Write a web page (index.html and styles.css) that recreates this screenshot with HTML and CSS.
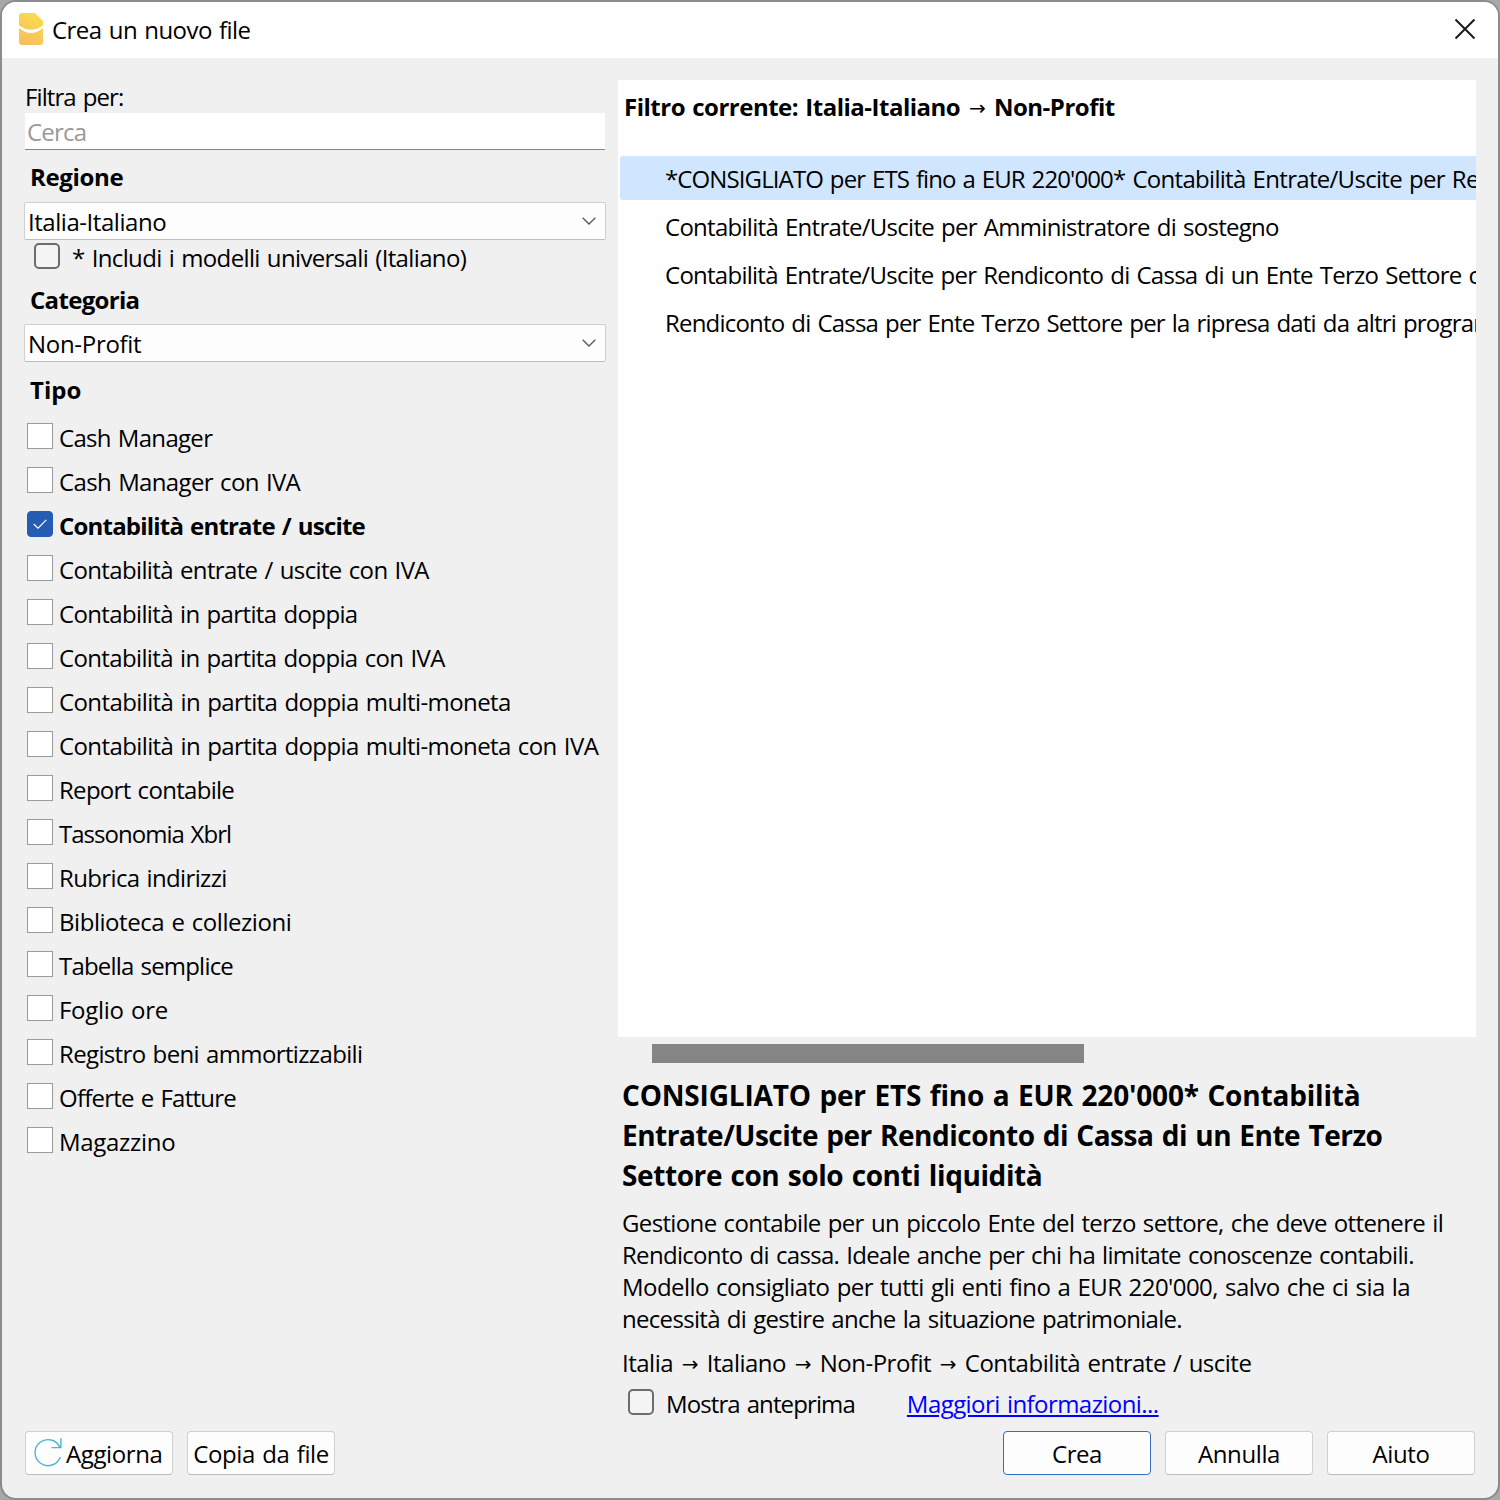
FILE: index.html
```html
<!DOCTYPE html>
<html lang="it">
<head>
<meta charset="utf-8">
<title>Crea un nuovo file</title>
<link rel="stylesheet" href="styles.css">
</head>
<body>
<div class="dialog">
  <header class="titlebar">
    <svg class="logo" width="24" height="32" viewBox="0 0 24 32"><defs><linearGradient id="gold" x1="0.7" y1="0" x2="0.3" y2="1"><stop offset="0" stop-color="#fbdc4c"/><stop offset="1" stop-color="#f5bf60"/></linearGradient></defs><path d="M3 0H16L24 8V29Q24 32 21 32H3Q0 32 0 29V3Q0 0 3 0Z" fill="url(#gold)"/><path d="M0 12.5Q12 21 24 12.5V15Q12 25 0 15Z" fill="#fff"/></svg>
    <h1 class="title">Crea un nuovo file</h1>
    <svg class="close" width="22" height="22" viewBox="0 0 22 22"><path d="M1.5 1.5L20.5 20.5M20.5 1.5L1.5 20.5" stroke="#1a1a1a" stroke-width="2" fill="none"/></svg>
  </header>
  <main class="content">
    <section class="filters">
      <label class="search-label">Filtra per:</label>
      <div class="search">Cerca</div>
      <h2 class="group region">Regione</h2>
      <div class="combo"><span class="k45">Italia-Italiano</span><svg class="chevron" width="14" height="8" viewBox="0 0 14 8"><path d="M.7.8L7 7 13.3.8" fill="none" stroke="#555" stroke-width="1.3"/></svg></div>
      <div class="include"><i class="box"></i><span>* Includi i modelli universali (Italiano)</span></div>
      <h2 class="group category">Categoria</h2>
      <div class="combo"><span class="k30">Non-Profit</span><svg class="chevron" width="14" height="8" viewBox="0 0 14 8"><path d="M.7.8L7 7 13.3.8" fill="none" stroke="#555" stroke-width="1.3"/></svg></div>
      <h2 class="group type">Tipo</h2>
      <ul class="types">
        <li><i class="check"></i><span class="k70">Cash Manager</span></li>
        <li><i class="check"></i><span>Cash Manager con IVA</span></li>
        <li class="checked"><i class="check"><svg width="14" height="10" viewBox="0 0 14 10"><path d="M.7 5L5 9.2 13.3.8" fill="none" stroke="#fff" stroke-width="1.2"/></svg></i><span>Contabilità entrate / uscite</span></li>
        <li><i class="check"></i><span>Contabilità entrate / uscite con IVA</span></li>
        <li><i class="check"></i><span>Contabilità in partita doppia</span></li>
        <li><i class="check"></i><span>Contabilità in partita doppia con IVA</span></li>
        <li><i class="check"></i><span class="k60">Contabilità in partita doppia multi-moneta</span></li>
        <li><i class="check"></i><span class="k60">Contabilità in partita doppia multi-moneta con IVA</span></li>
        <li><i class="check"></i><span class="k70">Report contabile</span></li>
        <li><i class="check"></i><span class="k95">Tassonomia Xbrl</span></li>
        <li><i class="check"></i><span>Rubrica indirizzi</span></li>
        <li><i class="check"></i><span class="k45">Biblioteca e collezioni</span></li>
        <li><i class="check"></i><span class="k80">Tabella semplice</span></li>
        <li><i class="check"></i><span class="k30">Foglio ore</span></li>
        <li><i class="check"></i><span>Registro beni ammortizzabili</span></li>
        <li><i class="check"></i><span class="k76">Offerte e Fatture</span></li>
        <li><i class="check"></i><span class="k30">Magazzino</span></li>
      </ul>
    </section>
    <section class="results">
      <div class="list">
        <h2 class="current">Filtro corrente: Italia-Italiano <b class="arrow">→</b> Non-Profit</h2>
        <ul class="templates">
          <li class="selected"><span class="k89">*CONSIGLIATO per ETS fino a EUR 220'000*</span> <span class="k70">Contabilità Entrate/Uscite per Rendiconto</span></li>
          <li><span class="k72">Contabilità Entrate/Uscite per Amministratore di sostegno</span></li>
          <li><span class="k74">Contabilità Entrate/Uscite per Rendiconto di Cassa di un Ente Terzo Settore con</span></li>
          <li><span class="k80">Rendiconto di Cassa per Ente Terzo Settore per la ripresa dati da altri programmi</span></li>
        </ul>
      </div>
      <div class="scrollbar"><div class="thumb"></div></div>
      <h2 class="heading"><span class="k18">CONSIGLIATO per ETS fino a EUR 220'000* Contabilità</span><br><span class="k49">Entrate/Uscite per Rendiconto di Cassa di un Ente Terzo</span><br><span class="k40">Settore con solo conti liquidità</span></h2>
      <p class="description"><span>Gestione contabile per un piccolo Ente del terzo settore, che deve ottenere il</span><br><span class="k69">Rendiconto di cassa. Ideale anche per chi ha limitate conoscenze contabili.</span><br><span class="k56">Modello consigliato per tutti gli enti fino a EUR 220'000, salvo che ci sia la</span><br><span class="k69">necessità di gestire anche la situazione patrimoniale.</span></p>
      <p class="path">Italia <b class="arrow">→</b> Italiano <b class="arrow">→</b> Non-Profit <b class="arrow">→</b> Contabilità entrate / uscite</p>
      <div class="preview"><i class="box"></i><span class="k89">Mostra anteprima</span><a class="more" href="#">Maggiori informazioni...</a></div>
    </section>
  </main>
  <footer class="actions">
    <button class="btn refresh"><svg width="28" height="29" viewBox="0 0 28 29"><path d="M26.3 19A13 13 0 1 1 26 9.5M17.5 9.6H26.9V.2" fill="none" stroke="#4db6cf" stroke-width="1.4"/></svg><span>Aggiorna</span></button>
    <button class="btn">Copia da file</button>
    <button class="btn primary">Crea</button>
    <button class="btn">Annulla</button>
    <button class="btn">Aiuto</button>
  </footer>
</div>
</body>
</html>
```
FILE: styles.css
```css
* { box-sizing: border-box; }
html { background: #a8a8a8; }
body { margin: 0; width: 1500px; height: 1500px; overflow: hidden; font: 24px/32px "Open Sans", "Noto Sans", sans-serif; letter-spacing: -0.64px; word-spacing: 1.5px; color: #000; }
h1, h2, p, ul { margin: 0; padding: 0; font-size: inherit; font-weight: 400; }
ul { list-style: none; }

/* Tracking steps, in hundredths of a pixel */
.k18 { letter-spacing: -0.18px; }
.k30 { letter-spacing: -0.3px; }
.k40 { letter-spacing: -0.4px; }
.k45 { letter-spacing: -0.45px; }
.k49 { letter-spacing: -0.49px; }
.k56 { letter-spacing: -0.56px; }
.k60 { letter-spacing: -0.6px; }
.k69 { letter-spacing: -0.69px; }
.k70 { letter-spacing: -0.7px; }
.k72 { letter-spacing: -0.72px; }
.k74 { letter-spacing: -0.74px; }
.k76 { letter-spacing: -0.76px; }
.k80 { letter-spacing: -0.8px; }
.k89 { letter-spacing: -0.89px; }
.k95 { letter-spacing: -0.98px; }

.dialog { width: 1500px; height: 1500px; display: flex; flex-direction: column; background: #f0f0f0; border: 2px solid #8c8c8c; border-radius: 16px; overflow: hidden; white-space: nowrap; }
.titlebar { height: 56px; flex: none; display: flex; align-items: flex-start; background: #fff; padding: 11px 22px 0 17px; }
.title { flex: 1; margin: 1px 0 0 9px; letter-spacing: -0.55px; }
.close { margin-top: 5px; }
.content { flex: 1; display: flex; gap: 12px; padding: 22px 22px 0 22px; }
.filters { width: 582px; flex: none; display: flex; flex-direction: column; }
.search-label { height: 32px; padding: 1px 0 0 1px; letter-spacing: -0.9px; }
.search { height: 38px; margin: 0 1px; background: #fff; border-top: 1px solid #f0f0f0; border-bottom: 1px solid #858585; color: #999; padding: 3px 0 0 2px; letter-spacing: -0.8px; }
.group { font-weight: 700; padding-left: 6px; }
.region { margin: 11px 0 9px; letter-spacing: -0.35px; }
.category { margin: 10px 0 8px; letter-spacing: -0.68px; }
.type { margin: 12px 0 0; letter-spacing: 0; }
.combo { height: 38px; display: flex; justify-content: space-between; background: #fdfdfd; border: 1px solid #d0d0d0; border-bottom-color: #bcbcbc; border-radius: 2px; padding: 3px 9px 0 3px; }
.chevron { margin-top: 11px; }
.box { width: 26px; height: 26px; flex: none; border: 2px solid #6c6c6c; border-radius: 5px; background: #f4f4f4; }
.include { height: 34px; display: flex; padding: 3px 0 0 10px; gap: 12px; }
.include span { margin-top: -1px; }
.types { margin-top: 11px; }
.types li { height: 44px; display: flex; gap: 6px; padding: 6px 0 0 3px; }
.types span { margin-top: -1px; }
.check { width: 26px; height: 26px; flex: none; background: #fff; border: 1px solid #999; display: flex; align-items: center; justify-content: center; }
.checked { font-weight: 700; letter-spacing: -0.8px; }
.checked .check { background: #265db4; border-color: #265db4; border-radius: 4px; }
.results { width: 858px; flex: none; }
.list { height: 957px; background: #fff; overflow: hidden; padding-top: 11px; }
.current { height: 32px; font-weight: 700; padding-left: 6px; letter-spacing: -0.5px; }
.arrow { font-weight: 400; font-family: "DejaVu Sans", sans-serif; font-size: 20px; line-height: 1; margin: 0 1.5px; vertical-align: 1px; }
.templates { display: flex; flex-direction: column; gap: 4px; margin-top: 33px; }
.templates li { height: 44px; margin-left: 2px; padding: 7px 0 0 45px; }
.templates .selected { background: #d0e6ff; border-radius: 3px 0 0 3px; }
.scrollbar { height: 38px; padding: 7px 0 0 34px; }
.thumb { width: 432px; height: 19px; background: #858585; }
.heading { font-size: 28px; line-height: 40px; font-weight: 700; padding-left: 4px; }
.description { padding-left: 4px; margin-top: 12px; }
.path { height: 32px; padding-left: 4px; margin-top: 12px; letter-spacing: -0.5px; }
.preview { display: flex; padding-left: 10px; margin-top: 10px; }
.preview .box { margin-right: 12px; }
.preview span, .more { margin-top: -1px; }
.more { margin-left: 52px; color: #00f; letter-spacing: -0.56px; }
.actions { height: 67px; flex: none; display: flex; gap: 14px; padding: 0 23px; }
.btn { width: 148px; height: 44px; display: flex; justify-content: center; font: inherit; color: inherit; letter-spacing: -0.4px; word-spacing: inherit; background: #fdfdfd; border: 1px solid #d0d0d0; border-bottom-color: #bcbcbc; border-radius: 4px; padding: 6px 0 0; }
.refresh { justify-content: flex-start; gap: 4px; padding-left: 8px; }
.primary { margin-left: auto; border-color: #2f6fc0; }
```
